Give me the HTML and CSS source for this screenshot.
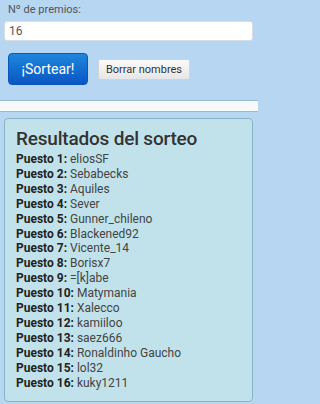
FILE: index.html
```html
<!DOCTYPE html>
<html lang="es">
<head>
<meta charset="utf-8">
<meta name="viewport" content="width=device-width, initial-scale=1">
<title>Sorteo</title>
<link rel="stylesheet" href="styles.css">
</head>
<body>
<div class="form">
  <label class="label" for="premios">Nº de premios:</label>
  <input class="input" id="premios" type="text" value="16">
  <div class="actions">
    <button class="btn-primary" type="button">¡Sortear!</button>
    <button class="btn-secondary" type="button">Borrar nombres</button>
  </div>
</div>
<div class="strip"></div>
<div class="results">
  <h2 class="title">Resultados del sorteo</h2>
  <ul class="list">
    <li><b>Puesto 1:</b> eliosSF</li>
    <li><b>Puesto 2:</b> Sebabecks</li>
    <li><b>Puesto 3:</b> Aquiles</li>
    <li><b>Puesto 4:</b> Sever</li>
    <li><b>Puesto 5:</b> Gunner_chileno</li>
    <li><b>Puesto 6:</b> Blackened92</li>
    <li><b>Puesto 7:</b> Vicente_14</li>
    <li><b>Puesto 8:</b> Borisx7</li>
    <li><b>Puesto 9:</b> =[k]abe</li>
    <li><b>Puesto 10:</b> Matymania</li>
    <li><b>Puesto 11:</b> Xalecco</li>
    <li><b>Puesto 12:</b> kamiiloo</li>
    <li><b>Puesto 13:</b> saez666</li>
    <li><b>Puesto 14:</b> Ronaldinho Gaucho</li>
    <li><b>Puesto 15:</b> lol32</li>
    <li><b>Puesto 16:</b> kuky1211</li>
  </ul>
</div>
</body>
</html>
```

FILE: styles.css
```css
html {
  background: #b6d6f2;
}
body {
  margin: 0;
  padding: 0;
  max-width: 258px;
  font-family: Roboto, "Noto Sans", sans-serif;
}
.form {
  padding: 3px 5px 0 4px;
  display: flex;
  flex-direction: column;
}
.label {
  font-size: 11px;
  color: #555;
  padding-left: 4px;
  line-height: 14px;
}
.input {
  margin-top: 4px;
  height: 20px;
  box-sizing: border-box;
  border: 1px solid #d6dde4;
  border-radius: 3px;
  background: #fff;
  font: 12px Roboto, sans-serif;
  color: #555;
  padding: 0 4px;
}
.actions {
  display: flex;
  align-items: center;
  gap: 10px;
  padding: 12px 0 15px 4px;
}
.btn-primary {
  width: 80px;
  height: 32px;
  border: 1px solid #0b58b8;
  border-radius: 4px;
  background: linear-gradient(#1f86db, #0a56c4);
  color: #fff;
  font: 14px Roboto, sans-serif;
  padding: 0;
}
.btn-secondary {
  width: 92px;
  height: 21px;
  border: 1px solid #cfd4d8;
  border-radius: 2px;
  background: linear-gradient(#fafafa, #e6e6e6);
  color: #333;
  font: 11px Roboto, sans-serif;
  padding: 0;
}
.strip {
  height: 10px;
  background: #f7f9fb;
  border-top: 1px solid #98bcd8;
  border-bottom: 1px solid #98bcd8;
}
.results {
  margin: 6px 5px 0 4px;
  height: 284px;
  box-sizing: border-box;
  background: #c1e2ea;
  border: 1px solid #86b4c4;
  border-radius: 4px;
  padding: 7px 10px 0 11px;
}
.title {
  margin: 0;
  font-size: 19px;
  font-weight: 500;
  letter-spacing: -0.2px;
  color: #333;
  line-height: 25px;
}
.list {
  list-style: none;
  margin: 1px 0 0;
  padding: 0;
  font-size: 12px;
  line-height: 14.9px;
  color: #444;
}
.list b {
  color: #222;
  font-weight: 700;
}
```
